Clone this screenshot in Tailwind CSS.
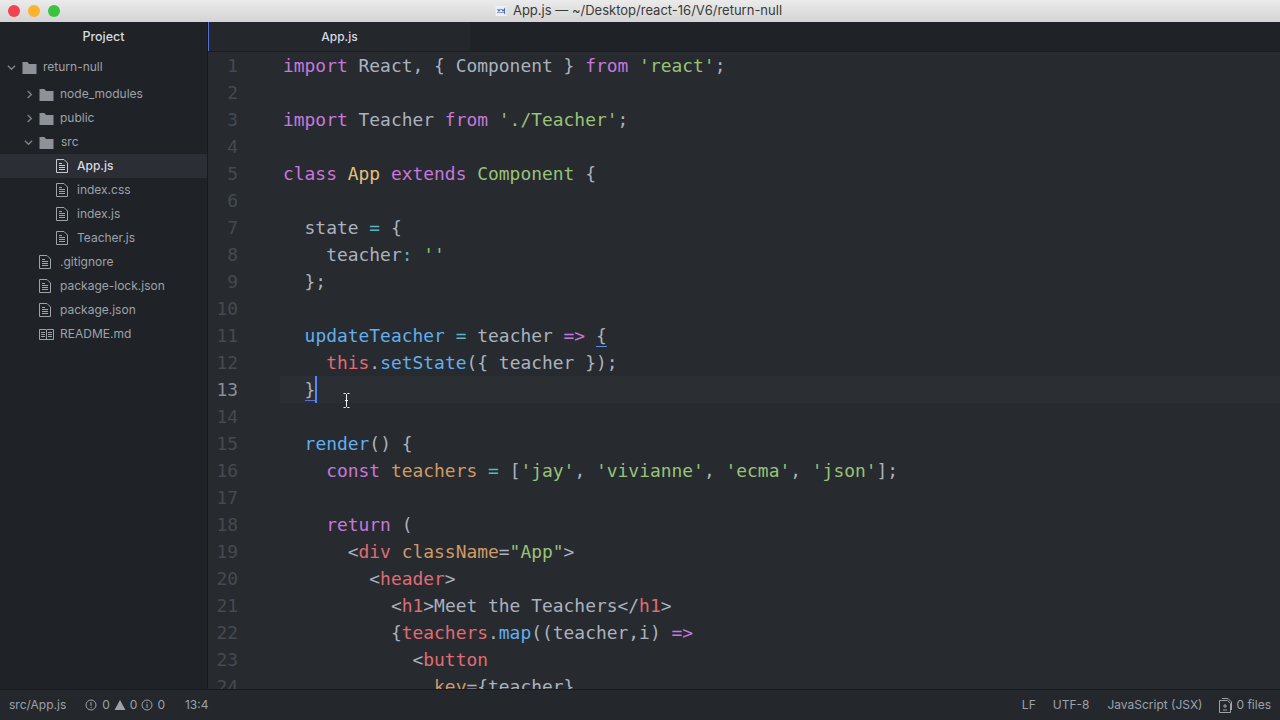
<!DOCTYPE html>
<html lang="en">
  <head>
    <meta charset="UTF-8" />
    <title>App.js — ~/Desktop/react-16/V6/return-null</title>
    <script src="https://cdn.jsdelivr.net/npm/@tailwindcss/browser@4"></script>
  </head>

  <body class="w-[1280px] h-[720px] overflow-hidden flex flex-col bg-[#272a2e] font-['Inter','Liberation_Sans',sans-serif]">
    <!-- title bar -->
    <header class="h-[22px] shrink-0 relative flex items-center justify-center bg-gradient-to-b from-[#ebebeb] to-[#d4d4d4] text-[#3a3a3a] text-[13px]">
      <div class="absolute left-[8px] top-[5px] flex gap-[8px]">
        <span class="w-3 h-3 rounded-full bg-[#f0444f]"></span>
        <span class="w-3 h-3 rounded-full bg-[#fbb32e]"></span>
        <span class="w-3 h-3 rounded-full bg-[#3ac33f]"></span>
      </div>
      <svg class="w-3 h-3 mr-[6px] ml-[-3px]" viewBox="0 0 12 12"><rect x="0.5" y="1" width="11" height="10" fill="#eef0f5"/><path d="M2.5 4l3 4M5.5 4l-3 4M6.5 4l3 4V4l-3 4" stroke="#4a6fb5" stroke-width="1.2" fill="none"/></svg>
      <span>App.js — ~/Desktop/react-16/V6/return-null</span>
    </header>

    <div class="flex-1 flex min-h-0">
      <!-- tree view -->
      <aside class="w-[207px] shrink-0 bg-[#1f2226] text-[#9da2ab] text-[12px]">
        <div class="h-[30px] flex items-center justify-center text-[#d7dae0] text-[12.5px] font-medium">Project</div>
        <ul class="pt-[3px]">
          <li class="h-[24px] mb-[3px] flex items-center pl-[7px] gap-[5px]">
            <svg class="w-[9px] h-[9px] mr-[1px]" viewBox="0 0 10 10"><path d="M1 3l4 4 4-4" stroke="#7d828b" stroke-width="1.6" fill="none"/></svg>
            <svg class="w-[15px] h-[13px] mr-[1px]" viewBox="0 0 15 13"><path d="M0.5 1h5l1.500 2h7.500v10h-14z" fill="#8d9198"/></svg>
            <span>return-null</span>
          </li>
          <li class="h-6 flex items-center pl-[25px] gap-[5px]">
            <svg class="w-[9px] h-[9px]" viewBox="0 0 10 10"><path d="M3 1l4 4-4 4" stroke="#7d828b" stroke-width="1.6" fill="none"/></svg>
            <svg class="w-[15px] h-[13px] mr-[1px]" viewBox="0 0 15 13"><path d="M0.5 1h5l1.500 2h7.500v10h-14z" fill="#8d9198"/></svg>
            <span>node_modules</span>
          </li>
          <li class="h-6 flex items-center pl-[25px] gap-[5px]">
            <svg class="w-[9px] h-[9px]" viewBox="0 0 10 10"><path d="M3 1l4 4-4 4" stroke="#7d828b" stroke-width="1.6" fill="none"/></svg>
            <svg class="w-[15px] h-[13px] mr-[1px]" viewBox="0 0 15 13"><path d="M0.5 1h5l1.500 2h7.500v10h-14z" fill="#8d9198"/></svg>
            <span>public</span>
          </li>
          <li class="h-6 flex items-center pl-[24px] gap-[6px]">
            <svg class="w-[9px] h-[9px]" viewBox="0 0 10 10"><path d="M1 3l4 4 4-4" stroke="#7d828b" stroke-width="1.6" fill="none"/></svg>
            <svg class="w-[15px] h-[13px] mr-[1px]" viewBox="0 0 15 13"><path d="M0.5 1h5l1.500 2h7.500v10h-14z" fill="#8d9198"/></svg>
            <span>src</span>
          </li>
          <li class="h-6 flex items-center pl-[56px] gap-[9px] bg-[#2b2e34] text-[#d7dae0] font-medium">
            <svg class="w-3 h-[14px]" viewBox="0 0 12 14"><path d="M0.500 0.500h7.500l3.500 3.500v9.500h-11zM3 4.500h3M3 6.500h6M3 8.500h6M3 10.500h6" stroke="#c5c8ce" fill="none"/></svg>
            <span>App.js</span>
          </li>
          <li class="h-6 flex items-center pl-[56px] gap-[9px]">
            <svg class="w-3 h-[14px]" viewBox="0 0 12 14"><path d="M0.500 0.500h7.500l3.500 3.500v9.500h-11zM3 4.500h3M3 6.500h6M3 8.500h6M3 10.500h6" stroke="#9da2ab" fill="none"/></svg>
            <span>index.css</span>
          </li>
          <li class="h-6 flex items-center pl-[56px] gap-[9px]">
            <svg class="w-3 h-[14px]" viewBox="0 0 12 14"><path d="M0.500 0.500h7.500l3.500 3.500v9.500h-11zM3 4.500h3M3 6.500h6M3 8.500h6M3 10.500h6" stroke="#9da2ab" fill="none"/></svg>
            <span>index.js</span>
          </li>
          <li class="h-6 flex items-center pl-[56px] gap-[9px]">
            <svg class="w-3 h-[14px]" viewBox="0 0 12 14"><path d="M0.500 0.500h7.500l3.500 3.500v9.500h-11zM3 4.500h3M3 6.500h6M3 8.500h6M3 10.500h6" stroke="#9da2ab" fill="none"/></svg>
            <span>Teacher.js</span>
          </li>
          <li class="h-6 flex items-center pl-[39px] gap-[9px]">
            <svg class="w-3 h-[14px]" viewBox="0 0 12 14"><path d="M0.500 0.500h7.500l3.500 3.500v9.500h-11zM3 4.500h3M3 6.500h6M3 8.500h6M3 10.500h6" stroke="#9da2ab" fill="none"/></svg>
            <span>.gitignore</span>
          </li>
          <li class="h-6 flex items-center pl-[39px] gap-[9px]">
            <svg class="w-3 h-[14px]" viewBox="0 0 12 14"><path d="M0.500 0.500h7.500l3.500 3.500v9.500h-11zM3 4.500h3M3 6.500h6M3 8.500h6M3 10.500h6" stroke="#9da2ab" fill="none"/></svg>
            <span>package-lock.json</span>
          </li>
          <li class="h-6 flex items-center pl-[39px] gap-[9px]">
            <svg class="w-3 h-[14px]" viewBox="0 0 12 14"><path d="M0.500 0.500h7.500l3.500 3.500v9.500h-11zM3 4.500h3M3 6.500h6M3 8.500h6M3 10.500h6" stroke="#9da2ab" fill="none"/></svg>
            <span>package.json</span>
          </li>
          <li class="h-6 flex items-center pl-[39px] gap-[6px]">
            <svg class="w-[15px] h-[13px]" viewBox="0 0 15 13"><path d="M0.500 1.500h6.500l.5.500.5-.5h6.500v10h-6.500l-.5.500-.5-.5h-6.500zM7.500 2v10M2 4.500h4M2 6.500h4M2 8.500h4M9 4.500h4M9 6.500h4M9 8.500h4" stroke="#9da2ab" fill="none"/></svg>
            <span>README.md</span>
          </li>
        </ul>
      </aside>

      <!-- editor -->
      <main class="relative flex-1 min-w-0 flex flex-col border-l border-[#181a1f] overflow-hidden">
        <div class="h-[30px] shrink-0 flex bg-[#1f2226] border-b border-[#1a1c20]">
          <div class="w-[263px] -ml-px flex items-center justify-center border-l-2 border-[#5a6fd6] bg-[#24272b] text-[#d7dae0] text-[12px] font-medium">App.js</div>
        </div>

        <div class="flex-1 min-h-0 overflow-hidden -mt-[0.5px] text-[17.93px] leading-[27px] font-['DejaVu_Sans_Mono',monospace] text-[#abb2bf]">
          <div class="h-[27px] flex whitespace-pre"><span class="w-[30px] text-right text-[#454a52]">1</span><span class="ml-[45px]"><span class="text-[#c678dd]">import</span> React, { Component } <span class="text-[#c678dd]">from</span> <span class="text-[#98c379]">'react'</span>;</span></div>
          <div class="h-[27px] flex whitespace-pre"><span class="w-[30px] text-right text-[#454a52]">2</span></div>
          <div class="h-[27px] flex whitespace-pre"><span class="w-[30px] text-right text-[#454a52]">3</span><span class="ml-[45px]"><span class="text-[#c678dd]">import</span> Teacher <span class="text-[#c678dd]">from</span> <span class="text-[#98c379]">'./Teacher'</span>;</span></div>
          <div class="h-[27px] flex whitespace-pre"><span class="w-[30px] text-right text-[#454a52]">4</span></div>
          <div class="h-[27px] flex whitespace-pre"><span class="w-[30px] text-right text-[#454a52]">5</span><span class="ml-[45px]"><span class="text-[#c678dd]">class</span> <span class="text-[#e5c07b]">App</span> <span class="text-[#c678dd]">extends</span> <span class="text-[#98c379]">Component</span> {</span></div>
          <div class="h-[27px] flex whitespace-pre"><span class="w-[30px] text-right text-[#454a52]">6</span></div>
          <div class="h-[27px] flex whitespace-pre"><span class="w-[30px] text-right text-[#454a52]">7</span><span class="ml-[45px]">  state <span class="text-[#56b6c2]">=</span> {</span></div>
          <div class="h-[27px] flex whitespace-pre"><span class="w-[30px] text-right text-[#454a52]">8</span><span class="ml-[45px]">    teacher<span class="text-[#56b6c2]">:</span> <span class="text-[#98c379]">''</span></span></div>
          <div class="h-[27px] flex whitespace-pre"><span class="w-[30px] text-right text-[#454a52]">9</span><span class="ml-[45px]">  };</span></div>
          <div class="h-[27px] flex whitespace-pre"><span class="w-[30px] text-right text-[#454a52]">10</span></div>
          <div class="h-[27px] flex whitespace-pre"><span class="w-[30px] text-right text-[#454a52]">11</span><span class="ml-[45px]">  <span class="text-[#61afef]">updateTeacher</span> <span class="text-[#56b6c2]">=</span> teacher <span class="text-[#c678dd]">=&gt;</span> <span class="border-b border-[#5a8fd6]">{</span></span></div>
          <div class="h-[27px] flex whitespace-pre"><span class="w-[30px] text-right text-[#454a52]">12</span><span class="ml-[45px]">    <span class="text-[#e06c75]">this</span>.<span class="text-[#61afef]">setState</span>({ teacher });</span></div>
          <div class="h-[27px] flex whitespace-pre"><span class="w-[30px] text-right text-[#8a8e95]">13</span><span class="ml-[42px] pl-[3px] flex-1 bg-[#2b2e33]">  <span class="border-b border-[#5a6fd6]">}</span><span class="inline-block w-[2px] h-[27px] align-top bg-[#528bff]"></span></span></div>
          <div class="h-[27px] flex whitespace-pre"><span class="w-[30px] text-right text-[#454a52]">14</span></div>
          <div class="h-[27px] flex whitespace-pre"><span class="w-[30px] text-right text-[#454a52]">15</span><span class="ml-[45px]">  <span class="text-[#61afef]">render</span>() {</span></div>
          <div class="h-[27px] flex whitespace-pre"><span class="w-[30px] text-right text-[#454a52]">16</span><span class="ml-[45px]">    <span class="text-[#c678dd]">const</span> <span class="text-[#d19a66]">teachers</span> <span class="text-[#56b6c2]">=</span> [<span class="text-[#98c379]">'jay'</span>, <span class="text-[#98c379]">'vivianne'</span>, <span class="text-[#98c379]">'ecma'</span>, <span class="text-[#98c379]">'json'</span>];</span></div>
          <div class="h-[27px] flex whitespace-pre"><span class="w-[30px] text-right text-[#454a52]">17</span></div>
          <div class="h-[27px] flex whitespace-pre"><span class="w-[30px] text-right text-[#454a52]">18</span><span class="ml-[45px]">    <span class="text-[#c678dd]">return</span> (</span></div>
          <div class="h-[27px] flex whitespace-pre"><span class="w-[30px] text-right text-[#454a52]">19</span><span class="ml-[45px]">      &lt;<span class="text-[#e06c75]">div</span> <span class="text-[#d19a66]">className</span>=<span class="text-[#98c379]">"App"</span>&gt;</span></div>
          <div class="h-[27px] flex whitespace-pre"><span class="w-[30px] text-right text-[#454a52]">20</span><span class="ml-[45px]">        &lt;<span class="text-[#e06c75]">header</span>&gt;</span></div>
          <div class="h-[27px] flex whitespace-pre"><span class="w-[30px] text-right text-[#454a52]">21</span><span class="ml-[45px]">          &lt;<span class="text-[#e06c75]">h1</span>&gt;Meet the Teachers&lt;/<span class="text-[#e06c75]">h1</span>&gt;</span></div>
          <div class="h-[27px] flex whitespace-pre"><span class="w-[30px] text-right text-[#454a52]">22</span><span class="ml-[45px]">          {<span class="text-[#e06c75]">teachers</span>.<span class="text-[#61afef]">map</span>((teacher,i) <span class="text-[#c678dd]">=&gt;</span></span></div>
          <div class="h-[27px] flex whitespace-pre"><span class="w-[30px] text-right text-[#454a52]">23</span><span class="ml-[45px]">            &lt;<span class="text-[#e06c75]">button</span></span></div>
          <div class="h-[27px] flex whitespace-pre"><span class="w-[30px] text-right text-[#454a52]">24</span><span class="ml-[45px]">              <span class="text-[#d19a66]">key</span>={teacher}</span></div>
        </div>

        <!-- mouse cursor -->
        <svg class="absolute left-[135px] top-[371px] w-[7px] h-[15px]" viewBox="0 0 7 15"><path d="M0.500 0.500h2l1 1 1-1h2M3.500 1.500v12M0.500 14.500h2l1-1 1 1h2M2 7.500h3" stroke="#f2f2f2" fill="none"/></svg>
      </main>
    </div>

    <!-- status bar -->
    <footer class="h-[31px] shrink-0 flex items-center justify-between bg-[#24272b] border-t border-[#181a1f] text-[#9da2ab] text-[12px]">
      <div class="flex items-center pl-[9px]">
        <span>src/App.js</span>
        <svg class="w-3 h-3 ml-[19px]" viewBox="0 0 12 12"><circle cx="6" cy="6" r="5" stroke="#9da2ab" fill="none"/><path d="M6 3v4M6 8v1.200" stroke="#9da2ab" fill="none"/></svg>
        <span class="ml-[5px]">0</span>
        <svg class="w-3 h-3 ml-[4px]" viewBox="0 0 12 12"><path d="M6 1l5.500 10h-11z" fill="#9da2ab"/></svg>
        <span class="ml-[4px]">0</span>
        <svg class="w-3 h-3 ml-[4px]" viewBox="0 0 12 12"><circle cx="6" cy="6" r="5" stroke="#9da2ab" fill="none"/><path d="M6 5v4M6 3v1.200" stroke="#9da2ab" fill="none"/></svg>
        <span class="ml-[4px]">0</span>
        <span class="ml-[20px]">13:4</span>
      </div>
      <div class="flex items-center pr-[9px]">
        <span>LF</span>
        <span class="ml-[17px]">UTF-8</span>
        <span class="ml-[18px]">JavaScript (JSX)</span>
        <svg class="w-[13px] h-[15px] ml-[17px]" viewBox="0 0 13 15"><path d="M0.500 2.500h8l3 3v9h-11zM3 0.500h6l3.500 3.500v8M6 6v4M4 8h4M4 12h4" stroke="#9da2ab" fill="none"/></svg>
        <span class="ml-[4px]">0 files</span>
      </div>
    </footer>
  </body>
</html>
